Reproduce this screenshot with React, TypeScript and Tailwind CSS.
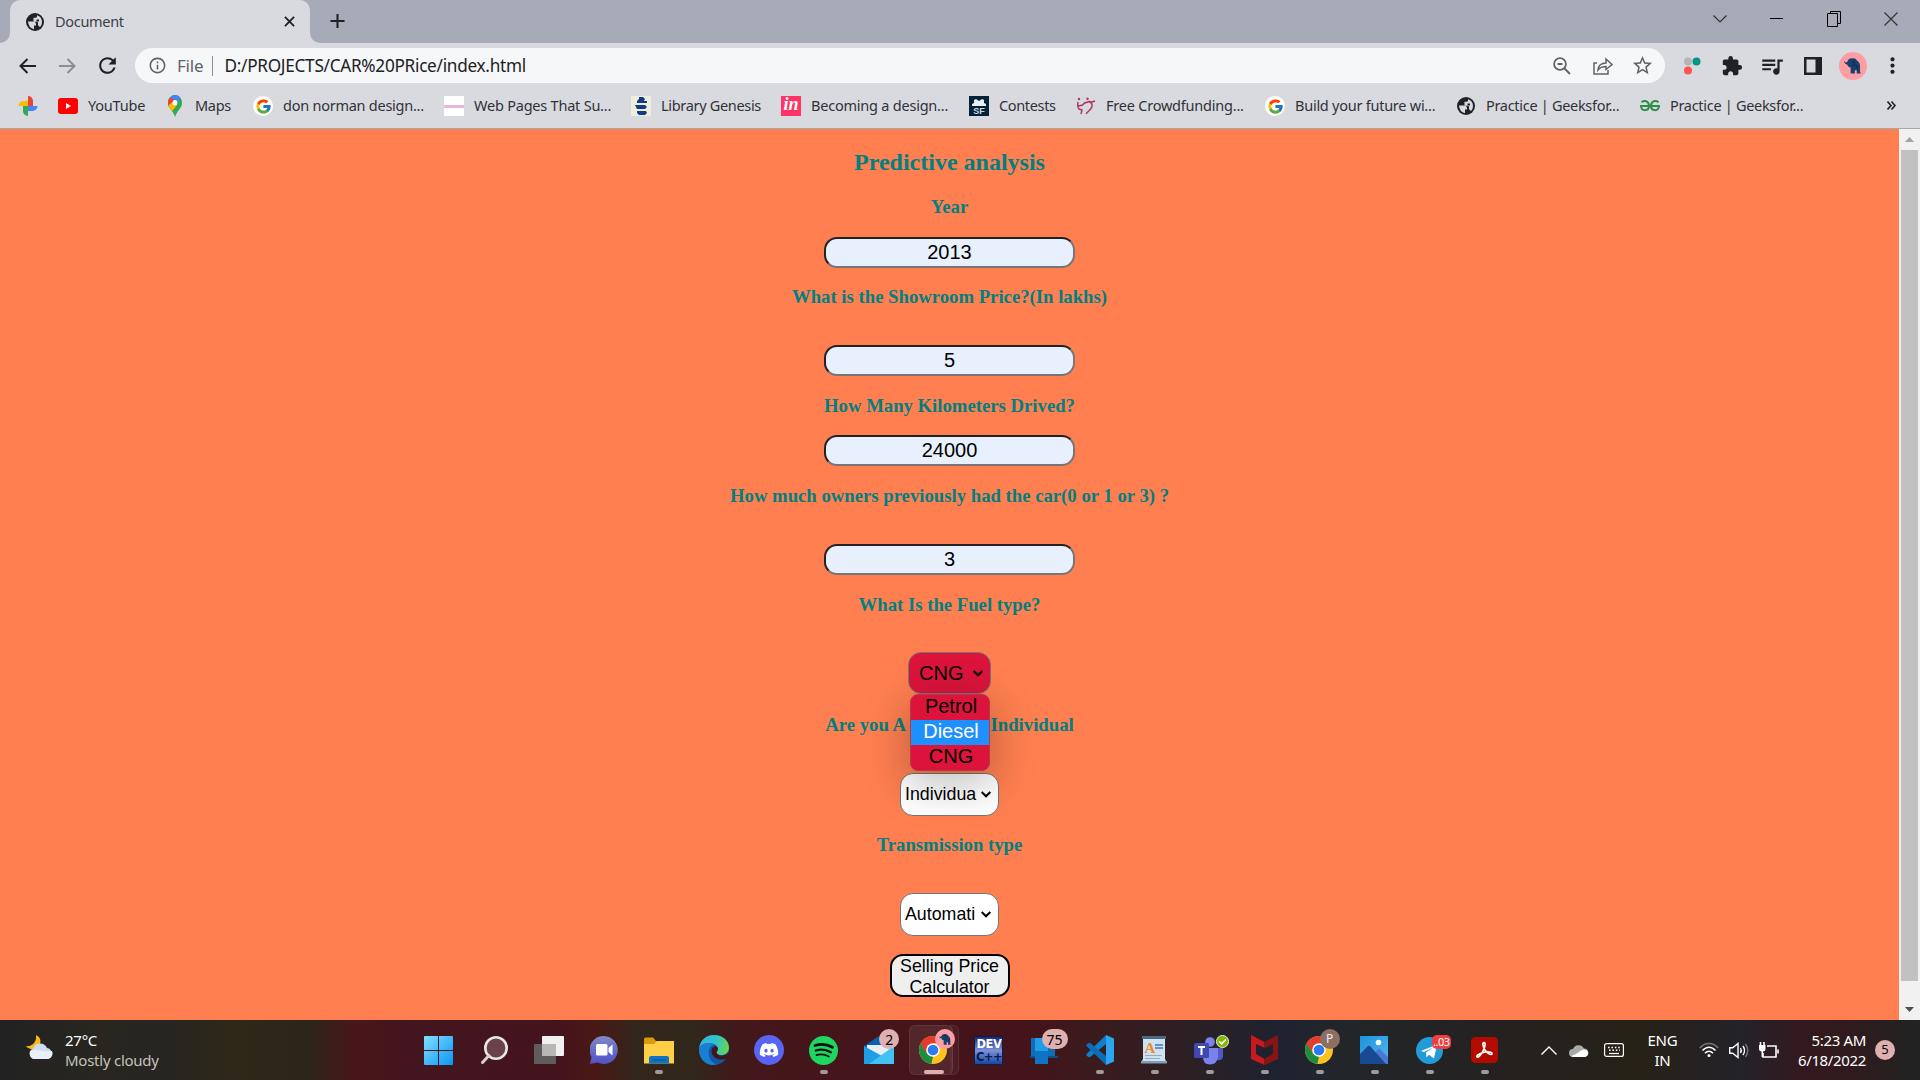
import React from 'react';
import { FcGoogle } from 'react-icons/fc';
import { FaDiscord } from 'react-icons/fa';
import { MdExtension, MdQueueMusic, MdStarOutline, MdMoreVert, MdRefresh, MdOutlineInfo } from 'react-icons/md';

const ui = "font-['Noto_Sans','Open_Sans',sans-serif]";

/* ---------- small logos ---------- */

const Globe = () => (
  <svg width="18" height="18" viewBox="0 0 18 18">
    <circle cx="9" cy="9" r="9" fill="#202124" />
    <path d="M2 8.500h5.500q2.500.3 2.500 2.500v1.500H8V16.200Q2.500 15 2 8.500z" fill="#d9dadf" />
    <path d="M7.500 6.500V4.800h2q1.500 0 1.500-1.300V2.300Q16 4 16 9q0 3.500-2.200 5.200-.3-1.700-1.800-1.700V10q0-1.200-1.200-1.200H7.500V7z" fill="#d9dadf" />
    <path d="M10.500 6.500h2.500v2h-2.500z" fill="#202124" />
  </svg>
);
const PhotosLogo = () => (
  <svg width="20" height="22" viewBox="0 0 20 22">
    <path d="M10 11V1a5 5 0 0 1 5 5v5z" fill="#ea4335" />
    <path d="M10 11h9.500a5 5 0 0 1-5 5H10z" fill="#4285f4" />
    <path d="M10 11v10a5 5 0 0 1-5-5v-5z" fill="#34a853" />
    <path d="M10 11H.5a5 5 0 0 1 5-5H10z" fill="#fbbc04" />
  </svg>
);
const YouTubeLogo = () => (
  <svg width="20" height="16" viewBox="0 0 20 16">
    <rect width="20" height="16" rx="3" fill="#f00" />
    <path d="M8 5v6l5-3z" fill="#fff" />
  </svg>
);
const MapsLogo = () => (
  <svg width="14" height="22" viewBox="0 0 14 20" preserveAspectRatio="none">
    <defs>
      <clipPath id="pin"><path d="M7 0a7 7 0 0 1 7 7c0 5-5 7-7 13C5 14 0 12 0 7a7 7 0 0 1 7-7z" /></clipPath>
    </defs>
    <g clipPath="url(#pin)">
      <rect width="14" height="20" fill="#34a853" />
      <path d="M0 0 3 2 7 6 1 11-2 8z" fill="#ea4335" />
      <path d="M0 10 6 5l3 4-6 7z" fill="#fbbc04" />
      <path d="M2 2 6-1l8 0v4L9 6z" fill="#4285f4" />
    </g>
    <circle cx="7" cy="7" r="2.400" fill="#fff" />
  </svg>
);
const GoogleLogo = () => (
  <span className="flex size-5 items-center justify-center rounded-full bg-white"><FcGoogle size={17} /></span>
);
const WebPagesLogo = () => (
  <span className="flex size-5 items-center bg-white"><span className="h-[3px] w-full bg-[#e9b8d6]" /></span>
);
const LibGenLogo = () => (
  <svg width="20" height="20" viewBox="0 0 20 20">
    <rect width="20" height="20" fill="#eeeedd" />
    <path d="M8 1h4l2 2-1 2h3v2H6V5l2-2zM4 9h10l2 2-2 2H6zM6 15h9l1 2-2 2H8l-2-2z" fill="#123a86" />
  </svg>
);
const InVisionLogo = () => (
  <span className="flex size-5 items-center justify-center bg-[#ff3366] font-['Liberation_Serif',serif] text-[18px] leading-none font-bold text-white italic"><span className="-mt-1">in</span></span>
);
const ContestsLogo = () => (
  <span className="relative flex size-5 items-end justify-center bg-[#06213a] font-['Liberation_Sans',sans-serif] text-[9px] leading-[10px] font-bold text-[#c9d8e3]">
    <svg className="absolute top-[3px] left-[3px]" width="14" height="7" viewBox="0 0 14 7"><path d="M0 7V5l2-1V1l2-1 3 2 3-2 2 1v3l2 1v2z" fill="#e8eef2" /></svg>
    <span>SF</span>
  </span>
);
const CrowdLogo = () => (
  <svg width="20" height="18" viewBox="0 0 20 18" fill="none" stroke="#b0375a" strokeWidth="1.500">
    <circle cx="3" cy="2" r="1.200" fill="#b0375a" stroke="none" />
    <circle cx="11.500" cy="1.800" r="1.200" fill="#b0375a" stroke="none" />
    <path d="M2 5q-1 5 1 7l3 1-1 4M2.500 9l4-1 3-3M9 6l4-1.500 3 .5M13 4.800c4 1 4 5 1 8l-4 4M16 5l3-1" />
  </svg>
);
const GfgLogo = () => (
  <svg width="20" height="12" viewBox="0 0 20 12" fill="none" stroke="#2f8d46" strokeWidth="2">
    <path d="M1.500 2.200C5-.5 9 1.500 9 6c0 5-7.500 6-8 0h18c-.5 6-8 5-8 0 0-4.500 4-6.500 7.500-3.800" />
  </svg>
);

const bookmarks: { w: string; t: string; icon: React.ReactNode; label: string }[] = [
  { w: 'w-[40px]', t: '', icon: <PhotosLogo />, label: '' },
  { w: 'w-[107px]', t: 'tracking-[-0.2px]', icon: <YouTubeLogo />, label: 'YouTube' },
  { w: 'w-[88px]', t: 'tracking-[-0.3px]', icon: <MapsLogo />, label: 'Maps' },
  { w: 'w-[191px]', t: 'tracking-[-0.25px]', icon: <GoogleLogo />, label: 'don norman design...' },
  { w: 'w-[187px]', t: 'tracking-[-0.22px]', icon: <WebPagesLogo />, label: 'Web Pages That Su...' },
  { w: 'w-[150px]', t: 'tracking-[-0.32px]', icon: <LibGenLogo />, label: 'Library Genesis' },
  { w: 'w-[188px]', t: 'tracking-[-0.22px]', icon: <InVisionLogo />, label: 'Becoming a design...' },
  { w: 'w-[107px]', t: 'tracking-[-0.35px]', icon: <ContestsLogo />, label: 'Contests' },
  { w: 'w-[189px]', t: 'tracking-[-0.22px]', icon: <CrowdLogo />, label: 'Free Crowdfunding...' },
  { w: 'w-[191px]', t: 'tracking-[-0.25px]', icon: <GoogleLogo />, label: 'Build your future wi...' },
  { w: 'w-[184px]', t: 'tracking-[-0.3px]', icon: <Globe />, label: 'Practice | Geeksfor...' },
  { w: 'w-[184px]', t: 'tracking-[-0.3px]', icon: <GfgLogo />, label: 'Practice | Geeksfor...' },
];

const Elephant = ({ size }: { size: number }) => (
  <svg width={size} height={size} viewBox="0 0 18 18">
    <path d="M0 4q1.500 3 3.500 1Q5 1 9 1.500 12 1 14 4q3 2 3 6v6l1 1.500h-4.500V14h-2v3.500H7V11Q4 11 3.500 8 .5 8 0 4z" fill="#17406f" />
    <path d="M8 4q3.500 0 3 4-1 2-3 1.500M12 9q2 0 2.500 3" stroke="#0c2240" fill="none" />
  </svg>
);

function TabStrip() {
  return (
    <div className="flex h-[43px] bg-[#a7abb7]">
      <div className="flex w-[10px] items-end bg-[#d9dadf]"><div className="h-full w-full rounded-br-[10px] bg-[#a7abb7]" /></div>
      <div className="flex w-[300px] items-center rounded-t-[10px] bg-[#d9dadf] pl-[16px]">
        <Globe />
        <span className="ml-[11px] text-[14.500px] tracking-[-0.3px] text-[#3c4043]">Document</span>
        <svg className="mr-[15px] ml-auto" width="11" height="11" viewBox="0 0 12 12" stroke="#202124" strokeWidth="2"><path d="M1 1l10 10M11 1 1 11" /></svg>
      </div>
      <div className="w-[10px] bg-[#d9dadf]"><div className="h-full rounded-bl-[10px] bg-[#a7abb7]" /></div>
      <svg className="mt-[13px] ml-[10px]" width="15" height="16" viewBox="0 0 16 16" stroke="#202124" strokeWidth="2.200"><path d="M8 .5v15M.5 8h15" /></svg>
      <div className="ml-auto flex h-[37px] items-center text-[#111]">
        <div className="flex w-[57px] justify-center"><svg width="14" height="8" viewBox="0 0 14 8" fill="none" stroke="#333" strokeWidth="1.200"><path d="M.5.5 7 7 13.500.5" /></svg></div>
        <div className="flex w-[57px] justify-center"><div className="h-px w-[13px] bg-black" /></div>
        <div className="flex w-[57px] justify-center"><svg width="14" height="16" viewBox="0 0 14 16" fill="none" stroke="#000"><path d="M.5 2.500V15.500H10.500V2.500zM3.500 2.500V.5H13.500V12.500H10.500" /></svg></div>
        <div className="flex w-[58px] justify-center"><svg width="14" height="14" viewBox="0 0 14 14" stroke="#333" strokeWidth="1.200"><path d="M.5.5l13 13M13.500.5l-13 13" /></svg></div>
      </div>
    </div>
  );
}

const Slot = ({ children }: { children: React.ReactNode }) => (
  <div className="flex w-[40.200px] shrink-0 items-center justify-center">{children}</div>
);

function Toolbar() {
  return (
    <div className="flex h-[45px] items-center bg-[#d9dadf] pl-[7px] text-[#202124]">
      <Slot><svg width="17" height="16" viewBox="0 0 17 16" fill="none" stroke="#202124" strokeWidth="2"><path d="M8.500 1 1.500 8l7 7M1.500 8H17" /></svg></Slot>
      <Slot><svg width="17" height="16" viewBox="0 0 17 16" fill="none" stroke="#8b8d93" strokeWidth="2"><path d="m8.500 1 7 7-7 7M15.500 8H0" /></svg></Slot>
      <Slot><MdRefresh size={25} /></Slot>
      <div className="ml-[7.400px] flex h-[35px] w-[1530px] shrink-0 items-center rounded-full bg-[#f6f7f9] pl-[13px]">
        <MdOutlineInfo size={19} className="text-[#5f6368]" />
        <span className="ml-[10px] w-[35px] text-[17px] tracking-[-0.2px] text-[#5f6368]">File</span>
        <span className="h-[20px] w-[1.500px] bg-[#8f9196]" />
        <span className="ml-[11px] text-[17.200px] tracking-[-0.28px] text-[#202124]">D:/PROJECTS/CAR%20PRice/index.html</span>
        <div className="ml-auto flex pr-[2px] text-[#5f6368]">
          <Slot><svg width="18" height="18" viewBox="0 0 18 18" fill="none" stroke="#5f6368" strokeWidth="1.800"><circle cx="7" cy="7" r="5.900" /><path d="m11 11 6 6M4.500 7h5" /></svg></Slot>
          <Slot><svg width="20" height="18" viewBox="0 0 20 18" fill="none" stroke="#5f6368" strokeWidth="1.500"><path d="M4 6H1v11h14v-4M5 13c.5-5 4-7 8-7V2l6 5.500-6 5V9.500c-4 0-6 1-8 3.500z" /></svg></Slot>
          <Slot><MdStarOutline size={23} /></Slot>
        </div>
      </div>
      <div className="ml-[7px] flex">
        <Slot><svg width="18" height="18" viewBox="0 0 18 18"><circle cx="5" cy="4.500" r="4" fill="#b5b5b5" /><circle cx="13.500" cy="4.500" r="4" fill="#009688" /><circle cx="5" cy="13.500" r="4" fill="#ff5252" /></svg></Slot>
        <Slot><MdExtension size={22} /></Slot>
        <Slot><MdQueueMusic size={26} /></Slot>
        <Slot><svg width="18" height="18" viewBox="0 0 18 18"><path d="M0 0h18v18H0zM2.500 2.500v13h9v-13z" fillRule="evenodd" fill="#202124" /></svg></Slot>
        <Slot><div className="flex size-7 items-center justify-center rounded-full bg-[#ff9ea2]"><Elephant size={17} /></div></Slot>
        <Slot><MdMoreVert size={25} /></Slot>
      </div>
    </div>
  );
}

function BookmarksBar() {
  return (
    <div className="flex h-[41px] items-start border-b border-[#a5a7ab] bg-[#d9dadf] pl-[18px] text-[#202124]">
      {bookmarks.map((b, i) => (
        <div key={i} className={`flex h-[36px] shrink-0 items-center ${b.w}`}>
          <span className="flex w-5 shrink-0 items-center justify-center">{b.icon}</span>
          <span className={`ml-[10px] text-[14.500px] whitespace-nowrap text-[#303236] ${b.t}`}>{b.label}</span>
        </div>
      ))}
      <svg className="mt-[13px] ml-[63px]" width="9" height="9" viewBox="0 0 9 9" fill="none" stroke="#202124" strokeWidth="1.600"><path d="m.5.5 3.500 4-3.500 4m4-8 3.500 4-3.500 4" /></svg>
    </div>
  );
}

/* ---------- page ---------- */

const Label = ({ m, t = '', children }: { m: string; t?: string; children: React.ReactNode }) => (
  <h3 className={`font-['Liberation_Serif',serif] text-[18.720px] leading-[20px] font-bold whitespace-nowrap text-[#008080] ${m} ${t}`}>{children}</h3>
);
const Field = ({ m, value }: { m: string; value: string }) => (
  <div className={`flex h-[31px] w-[251px] shrink-0 items-center justify-center rounded-[13px] border-2 border-t-[#222] border-r-[#767676] border-b-[#767676] border-l-[#222] bg-[#e8f0fe] pb-[2px] font-['Liberation_Sans',sans-serif] text-[20px] leading-none text-black ${m}`}>{value}</div>
);
const Caret = () => (
  <svg width="10" height="7" viewBox="0 0 10 7" fill="none" stroke="#000" strokeWidth="2"><path d="m.7 1 4.300 4.300L9.300 1" /></svg>
);
const Select = ({ m, value }: { m: string; value: string }) => (
  <div className={`flex h-[43px] w-[99px] shrink-0 items-center rounded-[13px] border border-[#767676] bg-white pl-[4px] font-['Liberation_Sans',sans-serif] text-[17.800px] text-black ${m}`}>
    <span className="w-[76px]">{value}</span>
    <Caret />
  </div>
);

function CarForm() {
  return (
    <main className="flex flex-1 flex-col items-center bg-[#ff7f50]">
      <h1 className="mt-[19px] font-['Liberation_Serif',serif] text-[24px] leading-[28px] font-bold text-[#008080]">Predictive analysis</h1>
      <Label m="mt-[21px]">Year</Label>
      <Field m="mt-[20px]" value="2013" />
      <Label m="mt-[19px]">What is the Showroom Price?(In lakhs)</Label>
      <Field m="mt-[38px]" value="5" />
      <Label m="mt-[20px]">How Many Kilometers Drived?</Label>
      <Field m="mt-[19px]" value="24000" />
      <Label m="mt-[20px]">How much owners previously had the car(0 or 1 or 3) ?</Label>
      <Field m="mt-[38px]" value="3" />
      <Label m="mt-[20px]">What Is the Fuel type?</Label>
      <div className="relative mt-[37px] flex h-[42px] w-[83px] items-center rounded-[13px] border border-[#767676] bg-[#dc143c] pl-[10px] font-['Liberation_Sans',sans-serif] text-[20px] text-black">
        <span className="w-[54px]">CNG</span>
        <Caret />
        <div className="absolute top-[41px] left-[0.500px] z-10 w-[80px] overflow-hidden rounded-[8px] border border-[#b23b45] bg-[#dc143c] text-center shadow-[0_12px_42px_6px_rgba(0,0,0,0.22)]">
          <div className="h-[25px] pl-[3px] leading-[23px]">Petrol</div>
          <div className="h-[25px] bg-[#1e90ff] pl-[3px] leading-[23px] text-white">Diesel</div>
          <div className="h-[25px] pl-[3px] leading-[23px]">CNG</div>
        </div>
      </div>
      <Label m="mt-[21px]" t="flex gap-[84.500px]"><span>Are you A</span><span>Individual</span></Label>
      <Select m="mt-[38px]" value="Individua" />
      <Label m="mt-[19px]">Transmission type</Label>
      <Select m="mt-[38px]" value="Automati" />
      <button className="mt-[18px] flex h-[43px] w-[120px] shrink-0 items-center justify-center rounded-[13px] border-2 border-black bg-[#efefef] pt-[2px] font-['Liberation_Sans',sans-serif] text-[17.800px] leading-[21px] text-black">
        <span>Selling Price<br />Calculator</span>
      </button>
    </main>
  );
}

function Scrollbar() {
  return (
    <div className="flex w-[21px] flex-col items-center bg-[#f1f1f1]">
      <div className="flex h-[21px] items-center"><svg width="9" height="5" viewBox="0 0 9 5"><path d="M0 5 4.500 0 9 5z" fill="#a3a3a3" /></svg></div>
      <div className="h-[831px] w-[17px] bg-[#c1c1c1]" />
      <div className="mt-auto flex h-[21px] items-center"><svg width="9" height="5" viewBox="0 0 9 5"><path d="M0 0h9L4.500 5z" fill="#505050" /></svg></div>
    </div>
  );
}

/* ---------- taskbar ---------- */

const Chrome = ({ id }: { id: string }) => (
  <svg width="28" height="28" viewBox="0 0 28 28">
    <clipPath id={id}><circle cx="14" cy="14" r="14" /></clipPath>
    <g clipPath={`url(#${id})`}>
      <rect width="28" height="28" fill="#fcc31e" />
      <path d="M0 5 8.300 17.500 14 20.500 12 30H-2V4z" fill="#1e8e3e" />
      <path d="M1 7 8 17.500 14 7.500h14V-1H0z" fill="#e33b2e" />
    </g>
    <circle cx="14" cy="14" r="6.800" fill="#fff" />
    <circle cx="14" cy="14" r="5.300" fill="#2a7bf0" />
  </svg>
);

const Start = () => (
  <svg width="29" height="29" viewBox="0 0 29 29">
    <defs><linearGradient id="win" x1="0" y1="0" x2="1" y2="1"><stop stopColor="#82e0ff" /><stop offset="1" stopColor="#0a94f5" /></linearGradient></defs>
    <path d="M0 1q0-1 1-1h13v14H0zM15 0h13q1 0 1 1v13H15zM0 15h14v14H1q-1 0-1-1zM15 15h14v13q0 1-1 1H15z" fill="url(#win)" />
  </svg>
);
const Search = () => (
  <svg width="28" height="28" viewBox="0 0 28 28">
    <circle cx="16" cy="12" r="10.700" fill="#8a6a70" fillOpacity=".55" stroke="#e8e6e6" strokeWidth="2.600" />
    <path d="m9 19.500-6.500 7" stroke="#d5d2d2" strokeWidth="3" strokeLinecap="round" />
  </svg>
);
const TaskView = () => (
  <svg width="30" height="28" viewBox="0 0 30 28">
    <rect x="0" y="8" width="22" height="20" rx="1" fill="#5f5c5d" />
    <rect x="8" y="0" width="22" height="20" rx="1" fill="#f1f0f0" />
    <rect x="8" y="8" width="14" height="12" fill="#b9b6b6" />
  </svg>
);
const Chat = () => (
  <svg width="28" height="28" viewBox="0 0 28 28">
    <defs><linearGradient id="chat" x1="0" y1="0" x2="0" y2="1"><stop stopColor="#8287c8" /><stop offset="1" stopColor="#4f52c4" /></linearGradient></defs>
    <path d="M14 0a14 14 0 1 1-6.500 26.500L0 28l1.500-7A14 14 0 0 1 14 0z" fill="url(#chat)" />
    <rect x="6" y="8" width="11.500" height="11.500" rx="1.500" fill="#fff" /><path d="m18.500 12 4-3.500v11l-4-3.500z" fill="#fff" />
  </svg>
);
const Explorer = () => (
  <svg width="30" height="27" viewBox="0 0 30 27">
    <path d="M0 2q0-1.500 1.500-1.500H9l3 3.500h16V9H0z" fill="#d99a0b" />
    <path d="M0 7h10l3-3h17v22.500H0z" fill="#ffcf48" />
    <path d="M5 26.500V21q0-2 2-2h16q2 0 2 2v5.500z" fill="#1173c4" /><path d="M8.500 23h13" stroke="#0b4f92" />
  </svg>
);
const Edge = () => (
  <svg width="30" height="30" viewBox="0 0 30 30">
    <defs>
      <linearGradient id="e1" x1="0" y1=".3" x2="1" y2=".5"><stop stopColor="#2bb5e8" /><stop offset=".6" stopColor="#35c4c0" /><stop offset="1" stopColor="#67d84a" /></linearGradient>
    </defs>
    <circle cx="15" cy="15" r="15" fill="#0f58a8" />
    <path d="M0 14C1 5 7 0 15 0c9 0 15 6 15 12.500 0 5-4 7.500-7.500 7.500s-5.500-1.500-5-3c1-1 1.500-2 1.500-3C19 10 14 8 9.500 8 5 8 1 10.500 0 14z" fill="url(#e1)" />
    <path d="M0 14c1-3.500 4.500-6 9.500-6 2 0 4 .5 5.500 1.500-5 2-6 7-5 11 1 5 4 8 8 9C7 32 0 24 0 14z" fill="#1b7ed0" />
    <path d="M12.500 16c0-4 3-5 4.500-4.500 2 1 2.500 3 .5 5.500 0 3 4.500 5 9.500 2.500l3.500-2 .5 2.500-3 3.500c-7 3-15.500-.500-15.500-7.500z" fill="#43141c" />
  </svg>
);
const Discord = () => (
  <div className="flex size-[30px] items-center justify-center rounded-full bg-[#5865f2] text-white"><FaDiscord size={20} /></div>
);
const Spotify = () => (
  <svg width="29" height="29" viewBox="0 0 29 29" fill="none" stroke="#111" strokeLinecap="round">
    <circle cx="14.500" cy="14.500" r="14.500" fill="#1ed760" stroke="none" />
    <path d="M6 9.500c6-1.800 12.500-1 17.500 1.800" strokeWidth="2.800" /><path d="M6.800 14.500c5-1.500 10.500-.8 15 1.800" strokeWidth="2.300" /><path d="M7.500 19c4.500-1.200 8.500-.6 12.300 1.500" strokeWidth="1.900" />
  </svg>
);
const Mail = () => (
  <svg width="30" height="28" viewBox="0 0 30 28">
    <path d="M0 10 15 0l15 10v8H0z" fill="#0a5fae" />
    <path d="M3 9h24v8l-12 6L3 17z" fill="#e9eef4" />
    <path d="M0 10 18 20 30 28H0z" fill="#1e9fe4" /><path d="m30 10-25 18h25z" fill="#40c2f5" />
  </svg>
);
const DevCpp = () => (
  <div className="flex size-[29px] flex-col items-center overflow-hidden border border-[#101c4a] bg-linear-to-b from-[#1c2878] via-[#7c92d8] to-[#1846a0] font-['DejaVu_Sans',sans-serif] text-[11.500px] leading-[13px] font-bold text-white">
    <span className="mt-px tracking-[-0.5px]">DEV</span>
    <span className="tracking-[-0.5px] text-[#071a50]">C++</span>
  </div>
);
const Phone = () => (
  <svg width="30" height="27" viewBox="0 0 30 27">
    <path d="M2 1h24v18H2z" fill="#0f6db8" /><path d="M0 19h30l-2 2H2z" fill="#0c518c" />
    <path d="M6 1h13v26H6z" fill="#1f9de6" /><path d="M6 14h13v13H6z" fill="#0f74c4" />
  </svg>
);
const VsCode = () => (
  <svg width="30" height="30" viewBox="0 0 30 30">
    <path d="M22 0 3 18.500q-1.500 1.500 0 2.500l1.500 1q1 .5 2-.3L22 9z" fill="#0f7fcb" />
    <path d="M22 30 3 11.500Q1.500 10 3 9l1.500-1q1-.5 2 .3L22 21z" fill="#0b6db5" />
    <path d="M22 0 30 3.500v23L22 30z" fill="#2aa6f2" />
  </svg>
);
const WordPad = () => (
  <svg width="26" height="28" viewBox="0 0 26 28">
    <path d="M2 1h22v22l2 4H0l2-4z" fill="#cfe2f1" /><path d="M1 0h24v3H1z" fill="#4b6a84" />
    <path d="M0 25h26v2.500H0z" fill="#7f9fb8" />
    <text x="3.500" y="17" fontFamily="Liberation Serif, serif" fontWeight="700" fontSize="15" fill="#f08a24">A</text>
    <path d="M14 9h8M14 12h8" stroke="#3e7ab8" strokeWidth="1.500" /><path d="M4 19.500h17M4 22.500h15" stroke="#9aaaba" />
  </svg>
);
const Teams = () => (
  <div className="relative flex h-[27px] w-[30px]">
    <svg width="30" height="28" viewBox="0 0 30 28">
      <circle cx="16" cy="5" r="4.800" fill="#7b83eb" /><path d="M22 11h7v8q0 5-6 4z" fill="#5059c9" />
      <path d="M10 11h14v9q-1 7.500-8 7.500T9 20z" fill="#7b83eb" /><rect y="6" width="15" height="15" rx="1.500" fill="#4148b0" />
      <path d="M4 10h7M7.500 10v8" stroke="#fff" strokeWidth="2" />
    </svg>
    <svg className="absolute -top-[2px] -right-[5px]" width="13" height="13" viewBox="0 0 12 12"><circle cx="6" cy="6" r="5.600" fill="#7fba00" stroke="#fff" strokeWidth=".8" /><path d="m3 6 2.200 2.200L9.200 4" fill="none" stroke="#fff" strokeWidth="1.500" /></svg>
  </div>
);
const McAfee = () => (
  <svg width="27" height="30" viewBox="0 0 27 30">
    <path d="M0 0 13.500 7v6L5 9v10l8.500 5v6L0 24z" fill="#c8191f" /><path d="M27 0 13.500 7v6L22 9v10l-8.500 5v6L27 24z" fill="#8a1414" />
  </svg>
);
const Photos = () => (
  <svg width="28" height="28" viewBox="0 0 28 28">
    <defs><linearGradient id="ph" x1="0" y1="0" x2="1" y2="1"><stop stopColor="#1c93dc" /><stop offset="1" stopColor="#56b7f2" /></linearGradient></defs>
    <rect width="28" height="28" fill="url(#ph)" /><path d="m14 18 4-5q1-.8 2 0l8 8v7H14z" fill="#4a78d4" />
    <path d="M0 18 8 10q1-.8 2 0l16 18H0z" fill="#174a92" /><circle cx="18.500" cy="6.500" r="2.800" fill="#fff" />
  </svg>
);
const Telegram = () => (
  <svg width="27" height="27" viewBox="0 0 27 27">
    <circle cx="13.500" cy="13.500" r="13.500" fill="#229bd8" />
    <path d="m5 14 16-6.500-3 14-5-3.700-2.500 2.700-.5-5 7-5-9 4.500z" fill="#fff" />
  </svg>
);
const Acrobat = () => (
  <svg width="27" height="26" viewBox="0 0 27 26">
    <rect width="27" height="26" rx="4.500" fill="#b30b00" />
    <path d="M13 5.500c2 0 1 5-1 8.500-2 4-5 7-6 6-1.500-1.500 4-4.500 8.500-5 4.500-.5 7 .5 6.500 2s-5-1-7-4c-2-3-3-7.500-1-7.500z" fill="none" stroke="#fff" strokeWidth="1.600" />
  </svg>
);

const Badge = ({ children, cls }: { children: React.ReactNode; cls: string }) => (
  <span className={`absolute flex items-center justify-center rounded-full ${cls}`}>{children}</span>
);

const apps: { icon: React.ReactNode; run?: boolean; active?: boolean; badge?: React.ReactNode }[] = [
  { icon: <Start /> },
  { icon: <Search /> },
  { icon: <TaskView /> },
  { icon: <Chat /> },
  { icon: <Explorer />, run: true },
  { icon: <Edge /> },
  { icon: <Discord /> },
  { icon: <Spotify />, run: true },
  { icon: <Mail />, badge: <Badge cls="top-[9px] left-[28px] size-5 bg-[#dfb0b0] text-[14px] text-black">2</Badge> },
  { icon: <Chrome id="c1" />, active: true, badge: <Badge cls="top-[9px] left-[29px] size-[20px] bg-[#ff9ea2]"><Elephant size={12} /></Badge> },
  { icon: <DevCpp /> },
  { icon: <Phone />, badge: <Badge cls="top-[9px] left-[25px] h-5 w-[26px] bg-[#dfb0b0] text-[14px] text-black">75</Badge> },
  { icon: <VsCode />, run: true },
  { icon: <WordPad />, run: true },
  { icon: <Teams />, run: true },
  { icon: <McAfee />, run: true },
  { icon: <Chrome id="c2" />, run: true, badge: <Badge cls="top-[9px] left-[28px] size-5 bg-[#8d6e63] text-[12px] text-[#eee]">P</Badge> },
  { icon: <Photos />, run: true },
  { icon: <Telegram />, run: true, badge: <Badge cls="top-[15px] left-[30px] h-[14px] w-[19px] !rounded-[5px] bg-[#f03e3e] text-[11px] tracking-[-0.5px] text-white">..03</Badge> },
  { icon: <Acrobat />, run: true },
];

function Taskbar() {
  return (
    <footer className={`flex h-[60px] bg-[linear-gradient(90deg,#222_0,#28261f_100px,#262521_160px,#2e2818_240px,#2c251a_310px,#48161a_352px,#43151e_420px,#43141d_560px,#491815_595px,#33261a_635px,#30281a_690px,#43171b_740px,#45131a_1020px,#3a1b1d_1095px,#2b2024_1190px,#1f2230_1275px,#22262a_1340px,#252120_1500px,#262217_1640px,#24222a_1740px,#33191f_1800px,#301a1d_1850px,#222_1910px)] text-white ${ui}`}>
      <div className="flex w-[411px] shrink-0 pt-[10px] pl-[26px]">
        <svg className="mt-[5px]" width="28" height="25" viewBox="0 0 28 25">
          <path d="M10 0c5 2 6 8 2 12-3 3-9 3-12-1 6 1 11-4 10-11z" fill="#fdb813" />
          <path d="M8 24a5.500 5.500 0 0 1-1-10.500A7.500 7.500 0 0 1 21 13a5.700 5.700 0 0 1 1 11z" fill="#cddcf0" />
          <path d="M8 24a5 5 0 0 1-3-8c6-3 14 2 21 0a5.700 5.700 0 0 1-4 8z" fill="#e8f0fa" />
        </svg>
        <div className="ml-[11px] text-[15px] leading-[20px] tracking-[-0.25px]"><div>27°C</div><div className="text-[#c4c2bd]">Mostly cloudy</div></div>
      </div>
      {apps.map((a, i) => (
        <div key={i} className="relative flex w-[55.050px] shrink-0 items-center justify-center">
          {a.active && <div className="absolute top-[5px] left-[3px] h-[50px] w-[44px] rounded-[6px] border border-white/8 bg-white/8" />}
          {a.active && <div className="absolute top-[5px] left-[44px] h-[50px] w-[9px] rounded-r-[6px] border border-l-0 border-white/8 bg-white/4" />}
          <div className={a.active ? 'relative -left-px' : ''}>{a.icon}</div>
          {a.badge}
          {a.run && <div className="absolute top-[50px] left-[24px] h-[4px] w-[8px] rounded-full bg-[#a09a9a]" />}
          {a.active && <div className="absolute top-[50px] left-[18px] h-[4px] w-[20px] rounded-full bg-[#dfb0b0]" />}
        </div>
      ))}
      <div className="flex flex-1 items-center pl-[29.500px]">
        <svg width="16" height="9" viewBox="0 0 16 9" fill="none" stroke="#fff" strokeWidth="1.400"><path d="m.5 8.500 7.500-7.500 7.500 7.500" /></svg>
        <svg className="ml-[12px]" width="20" height="13" viewBox="0 0 20 13"><path d="M4 13a4 4 0 0 1 0-8 6 6 0 0 1 11-.5A4.300 4.300 0 0 1 16 13z" fill="#a9a9a9" /><path d="M2 12q4-1 10-5.500 3-2 6 0 3 3.500-1.500 6.500H4z" fill="#fff" /></svg>
        <svg className="ml-[15px]" width="20" height="14" viewBox="0 0 20 14" fill="none" stroke="#fff"><rect x=".6" y=".6" width="18.800" height="12.800" rx="2" strokeWidth="1.200" /><path d="M4 4.500h12" strokeWidth="1.600" strokeDasharray="1.600 1.800" /><path d="M5 7.200h11" strokeWidth="1.600" strokeDasharray="1.600 1.800" /><path d="M5 10.500h10" strokeWidth="1.300" /></svg>
        <div className="ml-[18px] w-[40px] text-center text-[15px] leading-[20px] tracking-[-0.3px]">ENG<br />IN</div>
        <svg className="ml-[17px]" width="20" height="16" viewBox="0 0 20 16" fill="none" stroke="#fff" strokeWidth="1.500"><path d="M.8 6c5-6 13.400-6 18.400 0" stroke="#77757a" /><path d="M3.500 8.600c4-4.400 9-4.400 13 0M6 11.300c2.500-2.800 5.500-2.800 8 0" /><circle cx="10" cy="13.500" r="1.500" fill="#fff" stroke="none" /></svg>
        <svg className="ml-[10px]" width="20" height="17" viewBox="0 0 20 17" fill="none" stroke="#fff" strokeWidth="1.400"><path d="M.7 5.700h3L9 1.500v14l-5.300-4.200h-3z" /><path d="M11.500 6q1.500 2.500 0 5M14 4q3 4.500 0 9" /><path d="M16.500 2q4.500 6.500 0 13" stroke="#77757a" /></svg>
        <svg className="ml-[10px]" width="20" height="17" viewBox="0 0 20 17" fill="none" stroke="#fff" strokeWidth="1.600"><path d="M8 4h9v11H4v-4M19 7.500v4" /><path d="M1.500 0v4M5 0v4" /><path d="M0 3h6.500v4q0 2.500-3.200 2.500T0 7z" fill="#fff" stroke="none" /><path d="M3.300 9v6" /></svg>
        <div className="ml-auto text-right text-[15px] leading-[20px] tracking-[-0.35px]">5:23 AM<br />6/18/2022</div>
        <div className="mr-[25px] ml-[9px] flex size-5 items-center justify-center rounded-full bg-[#dfb0b0] text-[13px] text-black">5</div>
      </div>
    </footer>
  );
}

export default function App() {
  return (
    <div className="flex h-[1080px] w-[1920px] flex-col overflow-hidden">
      <header className={ui}>
        <TabStrip />
        <Toolbar />
        <BookmarksBar />
      </header>
      <div className="flex h-[891px] overflow-hidden">
        <CarForm />
        <Scrollbar />
      </div>
      <Taskbar />
    </div>
  );
}
